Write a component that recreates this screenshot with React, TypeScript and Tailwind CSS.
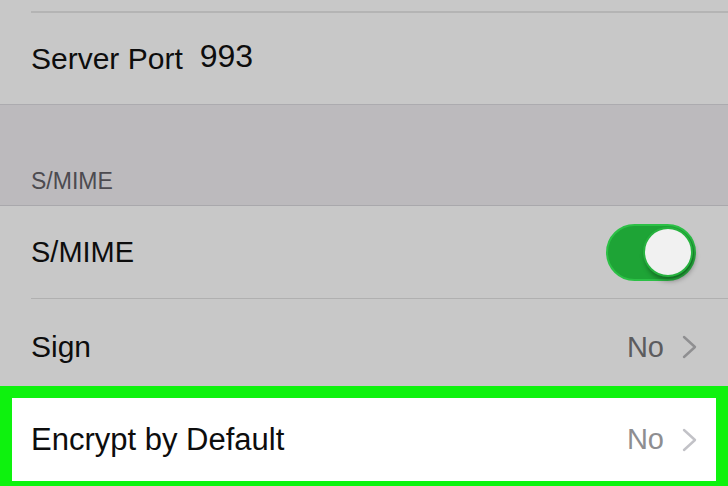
import React from "react";

function Chevron({ color }: { color: string }) {
  return (
    <svg width="15" height="24" viewBox="0 0 15 24" fill="none">
      <path d="M2 2 L13 12 L2 22" stroke={color} strokeWidth="2.4" strokeLinecap="round" strokeLinejoin="round" />
    </svg>
  );
}

export default function App() {
  return (
    <div className="w-[728px] h-[486px] overflow-hidden bg-[#c8c8c8] font-['Liberation_Sans',Arial,sans-serif] text-[#0d0d0d]">
      <div className="h-[11px]" />
      <div className="ml-[31px] h-[2px] bg-[#b4b4b4]" />
      <div className="h-[91px] flex items-center pl-[31px] gap-[17px]">
        <span className="text-[30px] leading-none">Server Port</span>
        <span className="text-[32px] leading-none -mt-[5px]">993</span>
      </div>
      <div className="h-px bg-[#acabaf]" />
      <div className="h-[100px] bg-[#bcbabd] flex items-end pb-[12px] pl-[31px]">
        <span className="text-[23px] leading-none text-[#4c4b50]">S/MIME</span>
      </div>
      <div className="h-px bg-[#a9a8ac]" />
      <div className="h-[92px] flex items-center justify-between pl-[31px] pr-[32px]">
        <span className="text-[29px] leading-none">S/MIME</span>
        <div className="relative w-[90px] h-[57px] rounded-full bg-[#1ea436] border-[2px] border-[#2cc046]">
          <div className="absolute right-[1px] top-[1px] w-[50px] h-[50px] rounded-full bg-[#f1f1f1] border-[2px] border-[#27b23f] shadow-[2px_4px_5px_rgba(0,0,0,0.35)]" />
        </div>
      </div>
      <div className="ml-[31px] h-px bg-[#b0b0b0]" />
      <div className="h-[87px] flex items-center justify-between pt-[9px] pl-[31px] pr-[31px]">
        <span className="text-[30px] leading-none">Sign</span>
        <div className="flex items-center gap-[18px]">
          <span className="text-[29px] leading-none text-[#5c5c5e]">No</span>
          <Chevron color="#8f8f91" />
        </div>
      </div>
      <div className="h-[107px] border-[12px] border-[#0ef20e] bg-white flex items-center justify-between pl-[19px] pr-[19px]">
        <span className="text-[31px] leading-none">Encrypt by Default</span>
        <div className="flex items-center gap-[18px]">
          <span className="text-[29px] leading-none text-[#8e8e91]">No</span>
          <Chevron color="#c2c2c7" />
        </div>
      </div>
    </div>
  );
}
